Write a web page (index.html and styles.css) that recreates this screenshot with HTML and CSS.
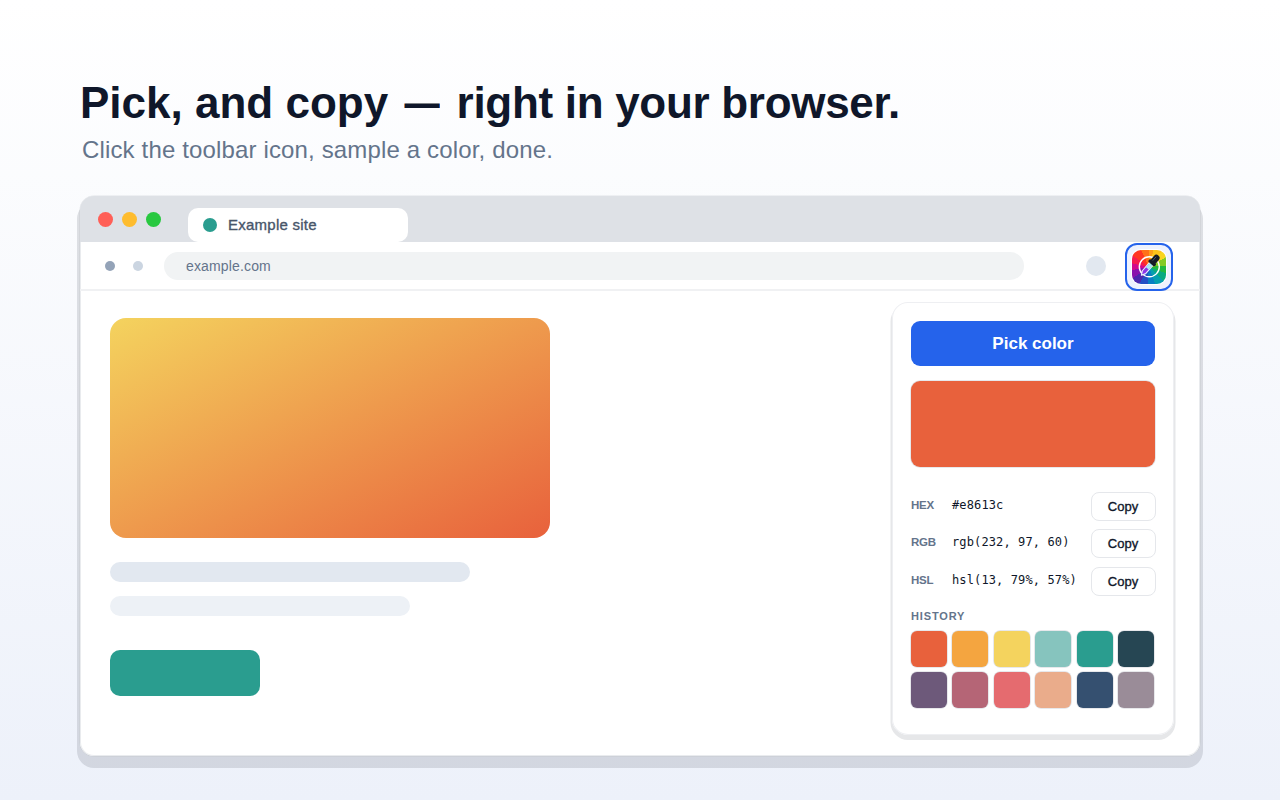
FILE: index.html
```
<!DOCTYPE html>
<html lang="en">
<head>
  <meta charset="UTF-8" />
  <meta name="viewport" content="width=device-width, initial-scale=1.0"/>
  <title>Color Picker</title>
  <link rel="stylesheet" href="styles.css">
</head>
<body>

  <!-- Headline -->
  <header>
    <h1>Pick, and copy <span class="dash">—</span> <span class="tight">right in your browser.</span></h1>
    <p class="subtitle">Click the toolbar icon, sample a color, done.</p>
  </header>

  <!-- Browser Window -->
  <main class="browser">
    <div class="tab-bar">
      <span class="light red"></span>
      <span class="light yellow"></span>
      <span class="light green"></span>
      <div class="tab"><span class="favicon"></span><span class="tab-title">Example site</span></div>
    </div>

    <div class="toolbar">
      <span class="nav-dot"></span>
      <span class="nav-dot pale"></span>
      <div class="address"><span>example.com</span></div>
      <span class="profile"></span>
      <div class="extension">
        <div class="app-icon">
          <svg width="34" height="34" viewBox="0 0 34 34">
            <circle cx="17.3" cy="16.8" r="10" fill="none" stroke="#fff" stroke-width="1.4"/>
            <g transform="translate(9.4 25.2) rotate(41)">
              <path d="M0 0 L-2.2 -4 V-15 H2.2 V-4 Z" fill="#8b35e8" stroke="#e9f4fb" stroke-width="1.1" stroke-linejoin="round"/>
              <path d="M-1.8 -9 H1.8 V-15 H-1.8 Z" fill="#a5ecf2"/>
              <rect x="-4.2" y="-18" width="8.4" height="3.2" rx="1" fill="#171b26"/>
              <rect x="-3.1" y="-26" width="6.2" height="10" rx="3" fill="#171b26"/>
              <path d="M-1 -23.5 V-18.5" stroke="#667080" stroke-width="0.7"/>
            </g>
          </svg>
        </div>
      </div>
    </div>

    <div class="page">
      <section class="article">
        <div class="hero"></div>
        <div class="line"></div>
        <div class="line short"></div>
        <div class="cta"></div>
      </section>

      <!-- Extension Popup -->
      <section class="popup">
        <button class="pick">Pick color</button>
        <div class="preview"></div>
        <div class="values">
          <div class="row"><label>HEX</label><code>#e8613c</code><button>Copy</button></div>
          <div class="row"><label>RGB</label><code>rgb(232, 97, 60)</code><button>Copy</button></div>
          <div class="row"><label>HSL</label><code>hsl(13, 79%, 57%)</code><button>Copy</button></div>
        </div>
        <h2>HISTORY</h2>
        <div class="history">
          <span style="background:#e8613c"></span>
          <span style="background:#f4a540"></span>
          <span style="background:#f4d35e"></span>
          <span style="background:#86c4be"></span>
          <span style="background:#2a9d8f"></span>
          <span style="background:#264653"></span>
          <span style="background:#6d597a"></span>
          <span style="background:#b56576"></span>
          <span style="background:#e56b6f"></span>
          <span style="background:#eaac8b"></span>
          <span style="background:#355070"></span>
          <span style="background:#9a8c98"></span>
        </div>
      </section>
    </div>
  </main>

</body>
</html>
```
FILE: styles.css
```
/* General Styling */
* {
  box-sizing: border-box;
}

body {
  font-family: "Liberation Sans", Arial, sans-serif;
  margin: 0;
  padding: 78px 80px 0;
  height: 800px;
  overflow: hidden;
  background: linear-gradient(#ffffff, #edf1fa);
  color: #0f172a;
}

header {
  height: 118px;
}

h1 {
  margin: 0;
  font-size: 44px;
  line-height: 50px;
  white-space: nowrap;
}

.dash {
  display: inline-block;
  transform: scaleX(0.8);
}

.tight {
  letter-spacing: -0.3px;
}

.subtitle {
  margin: 8px 0 0 2px;
  font-size: 24px;
  line-height: 28px;
  letter-spacing: 0.15px;
  color: #64748b;
}

/* Browser Window */
.browser {
  height: 560px;
  border-radius: 14px;
  background: white;
  box-shadow: inset 0 0 0 1px #e9ebee, 0 9px 0 3px rgba(15, 23, 42, 0.12), 0 0 0 0.5px #e2e4e8;
}

.tab-bar {
  display: flex;
  align-items: center;
  height: 46px;
  padding-left: 18px;
  gap: 9px;
  background: #dee1e6;
  border-radius: 14px 14px 0 0;
}

.light {
  width: 15px;
  height: 15px;
  border-radius: 50%;
}

.red {
  background: #ff5f57;
}

.yellow {
  background: #febc2e;
}

.green {
  background: #28c840;
}

.tab {
  display: flex;
  align-items: center;
  align-self: flex-end;
  width: 220px;
  height: 34px;
  margin-left: 18px;
  padding-left: 15px;
  gap: 11px;
  border-radius: 10px;
  background: white;
  color: #475569;
  font-size: 15px;
}

.tab-title {
  padding-bottom: 2px;
  letter-spacing: 0.25px;
  -webkit-text-stroke: 0.35px #475569;
}

.favicon {
  width: 14px;
  height: 14px;
  border-radius: 50%;
  background: #2a9d8f;
}

.toolbar {
  display: flex;
  align-items: center;
  height: 49px;
  padding-left: 25px;
  border-bottom: 2px solid #f0f1f3;
}

.nav-dot {
  width: 10px;
  height: 10px;
  margin-right: 18px;
  border-radius: 50%;
  background: #94a3b8;
}

.pale {
  background: #cbd5e1;
}

.address {
  width: 860px;
  height: 28px;
  margin: 1px 62px 0 3px;
  padding-left: 22px;
  border-radius: 14px;
  background: #f1f3f4;
  color: #64748b;
  font-size: 14px;
  line-height: 28px;
  letter-spacing: 0.15px;
}

.profile {
  width: 20px;
  height: 20px;
  margin-top: 1px;
  border-radius: 50%;
  background: #e2e8f0;
}

.extension {
  display: grid;
  place-items: center;
  width: 48px;
  height: 48px;
  margin: 2px 0 0 19px;
  border: 2px solid #2563eb;
  border-radius: 12px;
  background: #eef2fd;
}

.app-icon {
  width: 34px;
  height: 34px;
  border-radius: 9px;
  background: conic-gradient(#ff9d18 0 15deg, #ffc21a 15deg 40deg, #f9d51d 40deg 60deg, #83ca24 60deg 85deg, #20b83f 85deg 110deg, #08aa80 110deg 135deg, #049fae 135deg 160deg, #087fc3 160deg 185deg, #2450c5 185deg 210deg, #4e27ae 210deg 235deg, #8913ad 235deg 260deg, #d20b8c 260deg 282deg, #f51c50 282deg 305deg, #ff3522 305deg 335deg, #ff7018 335deg 360deg);
  box-shadow: 0 0 0 1px white;
}

.app-icon svg {
  display: block;
}

/* Page Content */
.page {
  display: flex;
  justify-content: space-between;
  padding: 11px 26px 0 30px;
}

.article {
  padding-top: 16px;
}

.hero {
  width: 440px;
  height: 220px;
  border-radius: 16px;
  background: linear-gradient(to bottom right, #f4d35e, #e8613c);
}

.line {
  width: 360px;
  height: 20px;
  margin-top: 24px;
  border-radius: 10px;
  background: #e2e8f0;
}

.short {
  width: 300px;
  margin-top: 14px;
  background: #edf1f6;
}

.cta {
  width: 150px;
  height: 46px;
  margin-top: 34px;
  border-radius: 10px;
  background: #2a9d8f;
}

/* Popup */
.popup {
  width: 282px;
  height: 433px;
  padding: 19px 19px 0 19px;
  border-radius: 16px;
  background: white;
  box-shadow: inset 0 0 0 1px #eeeff2, 0 3.5px 0 1.5px #e6e7e9;
}

button {
  font-family: inherit;
  white-space: nowrap;
}

.pick {
  display: block;
  width: 100%;
  height: 45px;
  padding: 1px 0 0;
  border: none;
  border-radius: 9px;
  background: #2563eb;
  color: white;
  font-size: 17px;
  font-weight: bold;
}

.preview {
  height: 86px;
  margin-top: 15px;
  border-radius: 9px;
  background: #e8613c;
  box-shadow: 0 0 0 0.75px #dfe1e5;
}

.values {
  display: grid;
  gap: 8.5px;
  margin-top: 24.5px;
}

.row {
  display: flex;
  height: 29px;
}

.row label {
  width: 41px;
  color: #64748b;
  font-size: 11.5px;
  font-weight: bold;
  line-height: 27px;
  letter-spacing: -0.3px;
}

.row code {
  flex: 1;
  font-family: "DejaVu Sans Mono", monospace;
  font-size: 12px;
  line-height: 27px;
  letter-spacing: 0.12px;
  white-space: nowrap;
}

.row button {
  width: 65px;
  height: 29px;
  margin-right: -0.5px;
  padding: 0;
  border: 1px solid #e5e7eb;
  border-radius: 8px;
  background: white;
  color: #0f172a;
  font-size: 13px;
  -webkit-text-stroke: 0.35px #0f172a;
}

h2 {
  margin: 13px 0 8px;
  color: #64748b;
  font-size: 11px;
  line-height: 14px;
  letter-spacing: 0.85px;
}

.history {
  display: grid;
  grid-template-columns: repeat(6, 36px);
  gap: 5.4px;
}

.history span {
  height: 36px;
  border-radius: 6px;
  box-shadow: 0 0 0 0.75px #dfe1e5;
}
```
